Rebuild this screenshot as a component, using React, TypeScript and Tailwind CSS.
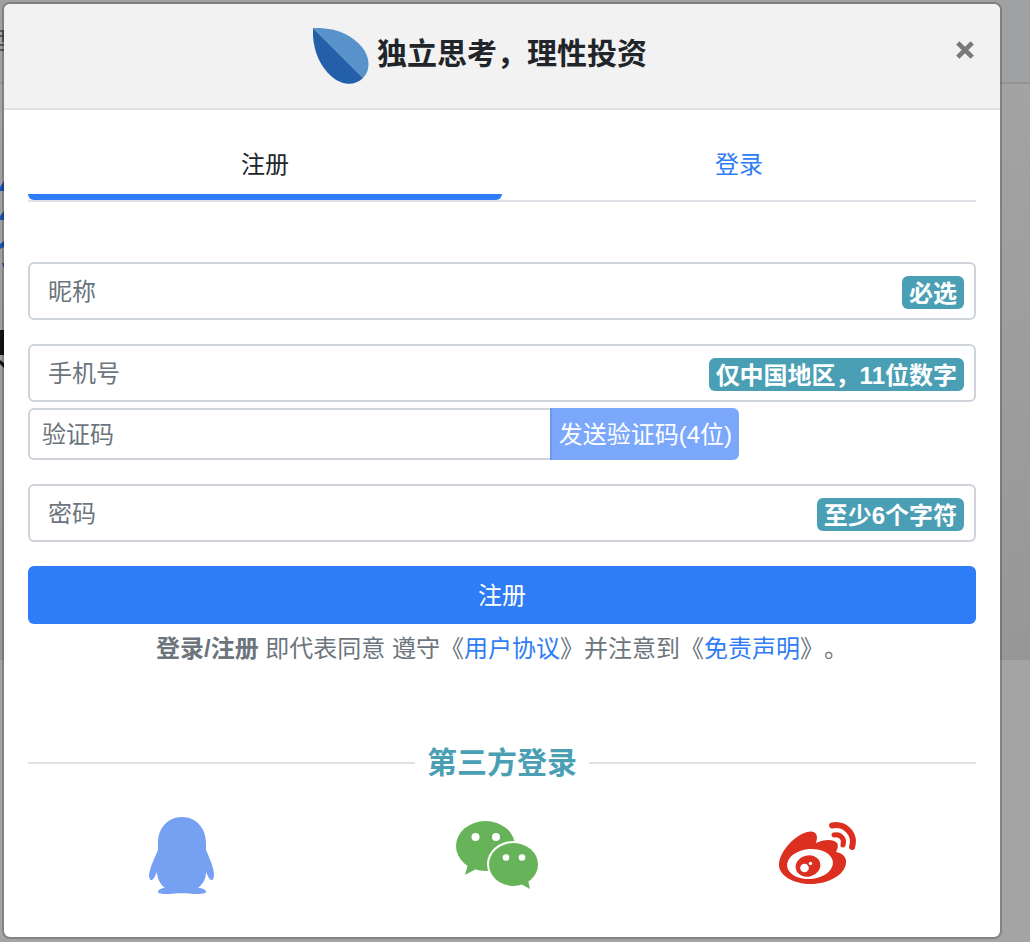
import React from "react";

function Leaf() {
  return (
    <svg viewBox="0 0 56 56" className="size-14 shrink-0" aria-hidden="true">
      <path d="M0 0C22-1 39 7 49 19C57 29 58 42 50 50Z" fill="#5892cb" />
      <path d="M0 0C-1 20 6 37 18 48C29 58 42 58 50 50Z" fill="#2460a9" />
    </svg>
  );
}

function Penguin() {
  return (
    <svg viewBox="0 0 66 78" className="h-[78px] w-[66px]" fill="#76a0f2" aria-hidden="true">
      <path d="M33 0C47 0 57 11 57 26V33C60 40 65 50 65 58C65 62 63 64 62 63C60 62 59 59 57 55C57 62 54 67 49 71C54 71 57 73 57 75C57 77 48 77 45 77C40 76 26 76 21 77C16 77 9 77 9 75C9 73 12 71 16 71C11 67 8 61 8 55C6 59 5 62 3 63C1 64 0 61 0 58C1 50 6 40 9 33V26C9 11 19 0 33 0Z" />
    </svg>
  );
}

function Wechat() {
  return (
    <svg viewBox="0 0 84 70" className="h-[70px] w-[84px]" aria-hidden="true">
      <ellipse cx="29.500" cy="25" rx="29.500" ry="25" fill="#67b359" />
      <path d="M12 43L9 54L20 48Z" fill="#67b359" />
      <ellipse cx="57.500" cy="43" rx="26.500" ry="23" fill="#fff" />
      <ellipse cx="57.500" cy="43.500" rx="24.500" ry="21.500" fill="#67b359" />
      <path d="M65 63L74 68L72 59Z" fill="#67b359" />
      <g fill="#fff">
        <circle cx="19.500" cy="16" r="4" />
        <circle cx="40" cy="16" r="4" />
        <circle cx="50" cy="36.500" r="3.300" />
        <circle cx="66" cy="36.500" r="3.300" />
      </g>
    </svg>
  );
}

function Weibo() {
  return (
    <svg viewBox="0 0 78 64" className="h-16 w-[78px]" fill="#dc2f20" aria-hidden="true">
      <path d="M0 43C0 31 14 14 28 10C36 8 40 12 37 21C45 17 55 17 58 21C60 24 58 28 57 30C63 31 68 35 67 41C66 53 49 62 32 62C15 62 0 54 0 43Z" />
      <ellipse cx="31" cy="42" rx="23" ry="15" fill="#fff" transform="rotate(-5 31 42)" />
      <ellipse cx="29" cy="44" rx="12.500" ry="10.500" transform="rotate(-15 29 44)" />
      <circle cx="25.500" cy="46" r="4.300" fill="#fff" />
      <circle cx="31.500" cy="41.500" r="1.700" fill="#fff" />
      <g fill="none" stroke="#dc2f20" strokeLinecap="round">
        <path d="M53 3.500C66 1 77 12 73 25" strokeWidth="6" />
        <path d="M55 13C62 12 66 17 64 23" strokeWidth="5" />
      </g>
    </svg>
  );
}

function Backdrop() {
  return (
    <div className="absolute inset-0 flex flex-col overflow-hidden bg-[#a4a4a4]" aria-hidden="true">
      <div className="h-[84px] border-b-2 border-[#949494] bg-[#a0a1a3]" />
      <div className="h-[576px] bg-linear-to-b from-[#a3a3a3] to-[#979797]" />
      <svg className="absolute top-0 left-0 h-96 w-1" viewBox="0 0 4 384">
        <path d="M0 31H4M0 36H4M0 45H4M0 50H4M3 31V42" stroke="#444" strokeWidth="1.500" />
        <path d="M0 187L4 181V191H0ZM0 216L4 211V220H0ZM0 244L4 241V247L0 249ZM2 263H4V268Z" fill="#1a56b0" />
        <path d="M0 330H4V355H0ZM0 360L4 363V368L0 364Z" fill="#151311" />
      </svg>
    </div>
  );
}

type FieldProps = { id: string; label: string; hint: string; type: string };

function Field({ id, label, hint, type }: FieldProps) {
  return (
    <div className="relative">
      <input
        id={id}
        type={type}
        placeholder=" "
        className="peer block h-[58px] w-full rounded-md border-2 border-[#ced4da] bg-white px-[18px] text-[#495057]"
      />
      <label htmlFor={id} className="invisible absolute top-3 left-5 leading-9 text-[#6c757d] peer-placeholder-shown:visible">
        {label}
      </label>
      <span className="pointer-events-none absolute top-3.5 right-3 rounded-md bg-[#4a9fb5] px-[7px] pt-0.5 leading-[31px] font-bold text-white">
        {hint}
      </span>
    </div>
  );
}

export default function App() {
  return (
    <div lang="zh-CN" className="relative min-h-screen pt-0.5 pr-7 pb-[3px] pl-0.5 font-['Liberation_Sans','Noto_Sans_CJK_SC',sans-serif] text-2xl text-[#212529] [text-spacing-trim:space-all]">
      <Backdrop />
      <section role="dialog" aria-labelledby="dialog-title" className="relative overflow-hidden rounded-lg border-2 border-black/20 bg-white bg-clip-padding">
        <header className="relative flex h-[106px] items-center justify-center border-b-2 border-[#dee2e6] bg-[#f2f2f2] pr-11">
          <div className="flex items-center gap-2">
            <Leaf />
            <h1 id="dialog-title" className="pb-1 text-[30px] leading-9 font-bold">独立思考，理性投资</h1>
          </div>
          <button type="button" aria-label="关闭" className="absolute top-[30px] right-[19px] flex size-8 items-center justify-center">
            <svg viewBox="0 0 18 18" className="size-5" aria-hidden="true">
              <path d="M2.500 2.500L15.500 15.500M15.500 2.500L2.500 15.500" stroke="#7a7a7a" strokeWidth="4.200" />
            </svg>
          </button>
        </header>
        <main className="px-6 pt-6 pb-[42px]">
          <div role="tablist" className="flex border-b-2 border-[#dee2e6]">
            <button type="button" role="tab" aria-selected="true" className="h-[66px] flex-1 rounded-md border-b-6 border-[#2f7df6] pt-0.5">注册</button>
            <button type="button" role="tab" aria-selected="false" className="h-[66px] flex-1 border-b-6 border-transparent pt-0.5 text-[#2f7df6]">登录</button>
          </div>
          <form className="pt-[60px]" onSubmit={(e) => e.preventDefault()}>
            <Field id="nickname" type="text" label="昵称" hint="必选" />
            <div className="pt-6">
              <Field id="phone" type="tel" label="手机号" hint="仅中国地区，11位数字" />
            </div>
            <div className="flex w-3/4 pt-1.5 pb-6">
              <div className="relative min-w-0 flex-1">
                <input id="code" placeholder=" " className="peer block h-[52px] w-full rounded-l-md border-2 border-r-0 border-[#ced4da] bg-white px-3" />
                <label htmlFor="code" className="invisible absolute top-[9px] left-3.5 leading-9 text-[#6c757d] peer-placeholder-shown:visible">验证码</label>
              </div>
              <button type="button" className="h-[52px] shrink-0 rounded-r-md border-l-2 border-[#6b97ee] bg-[#7ba8fa] px-[7px] pt-0.5 text-white">发送验证码(4位)</button>
            </div>
            <Field id="password" type="password" label="密码" hint="至少6个字符" />
            <button type="submit" className="mt-6 block h-[58px] w-full rounded-md bg-[#2f7df6] pt-0.5 text-white">注册</button>
          </form>
          <p className="pt-[7px] text-center leading-9 text-[#6c757d]">
            <b>登录/注册</b> 即代表同意 遵守《<a href="#terms" className="text-[#2f7df6]">用户协议</a>》并注意到《<a href="#disclaimer" className="text-[#2f7df6]">免责声明</a>》。
          </p>
          <div className="flex items-center gap-3 pt-[78px]">
            <div className="h-0.5 flex-1 bg-[#dee2e6]" />
            <h2 className="text-[30px] leading-9 font-bold text-[#4a9fb5]">第三方登录</h2>
            <div className="h-0.5 flex-1 bg-[#dee2e6]" />
          </div>
          <div className="grid grid-cols-3 items-center pt-9">
            <a href="#qq" aria-label="QQ登录" className="flex justify-center pr-2"><Penguin /></a>
            <a href="#wechat" aria-label="微信登录" className="flex justify-center pr-2"><Wechat /></a>
            <a href="#weibo" aria-label="微博登录" className="flex justify-center pb-1"><Weibo /></a>
          </div>
        </main>
      </section>
    </div>
  );
}
